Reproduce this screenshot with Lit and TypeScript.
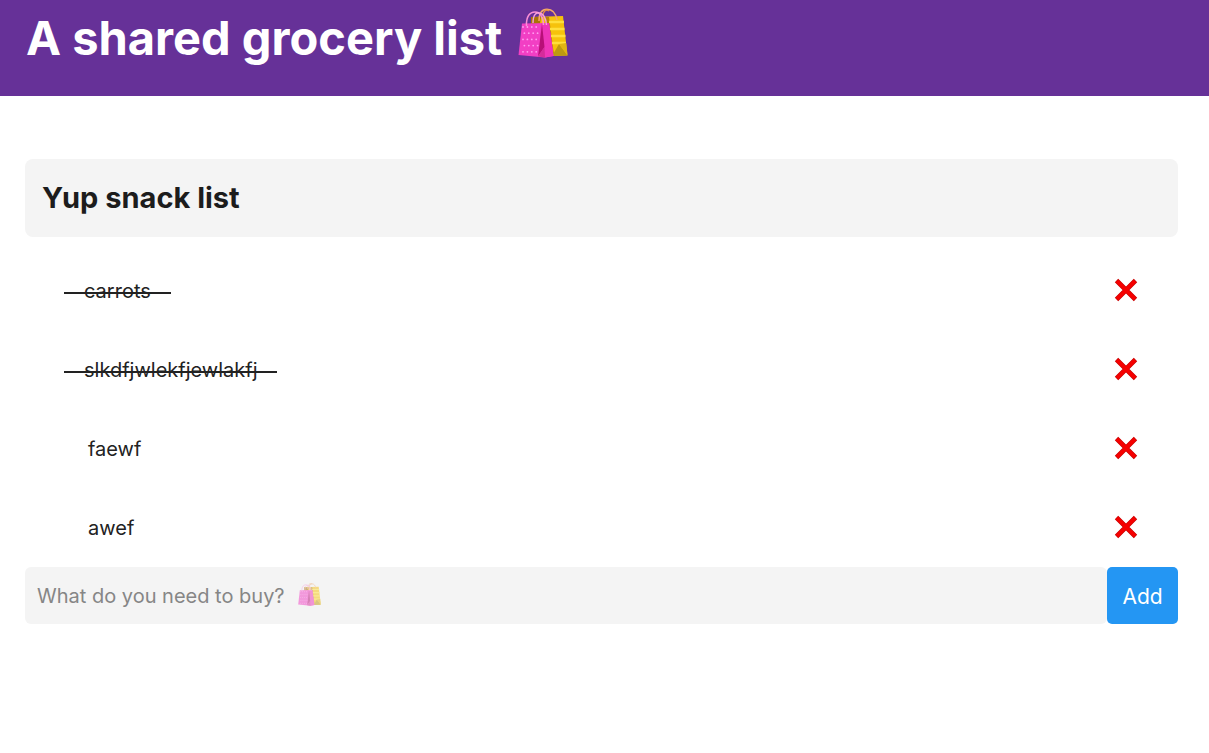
import { LitElement, html, css, svg } from "lit";
import { customElement, property, state } from "lit/decorators.js";

interface Item {
  name: string;
  done: boolean;
}

@customElement("shopping-bags")
class ShoppingBags extends LitElement {
  static styles = css`
    :host {
      display: inline-block;
    }
    svg {
      display: block;
      width: 100%;
      height: 100%;
    }
  `;

  render() {
    const dots = [];
    for (let row = 0; row < 5; row++) {
      for (let col = 0; col < 4; col++) {
        dots.push(svg`<circle cx=${5 + col * 4.4 + (row % 2) * 1.4} cy=${19 + row * 6.2} r="0.9" fill="#ff9df0" />`);
      }
    }
    return html`
      <svg viewBox="0 0 50 50" aria-hidden="true">
        <path d="M13 9 L45 8 L49.500 47.500 L32 48 L16 45 Z" fill="#f6c20c" />
        <path d="M13 9 L23 9 L22 16 L13 16 Z" fill="#a87405" />
        <path d="M27 9 L31 9 L36 47 L30 40 Z" fill="#b98208" />
        <path d="M31 14 H46 M32 21 H46.500 M33 28 H47.500 M34 35 H48" stroke="#ffdf3d" stroke-width="2.400" />
        <path d="M41 36 L49.500 47.500 L34 48 Z" fill="#bd9911" />
        <path d="M41 36 L48.200 35 L49.500 47 Z" fill="#e0b414" />
        <path d="M21 13 C21 4 25 1.200 29 1.200 C35 1.200 38 6 39 12" fill="none" stroke="#f5a96a" stroke-width="1.500" />
        <path d="M25 8 C25 3 28 1 31 3" fill="none" stroke="#e89143" stroke-width="1.300" />
        <path d="M4 15.500 L31 15 L35.500 48 L27 49.500 L0.500 47 Z" fill="#f23fc4" />
        <path d="M23 15 L31 15 L35.500 48 L27 49.500 L21 42 Z" fill="#ef35b9" />
        <path d="M24 16 L26.500 39 L20 48.500 Z" fill="#b80f78" />
        <path d="M26.500 39 L27 49.500 L20 48.500 Z" fill="#d42c9b" />
        ${dots}
        <path d="M8.500 18 C8 8 12 4 17 4 C23 4 25 9 25.500 17" fill="none" stroke="#f98fd6" stroke-width="1.500" />
        <path d="M15 15 C15 7 18 4 21.500 5 C26 6 28 10 28.500 17" fill="none" stroke="#f7a0dc" stroke-width="1.400" />
      </svg>
    `;
  }
}

@customElement("grocery-item")
class GroceryItem extends LitElement {
  @property() name = "";
  @property({ type: Boolean }) done = false;

  static styles = css`
    :host {
      display: flex;
      align-items: center;
      justify-content: space-between;
      height: 79px;
      padding: 0 40px 0 39px;
    }
    .name {
      padding: 2px 24px 0;
      font-size: 20px;
      line-height: 28px;
    }
    .done {
      position: relative;
      padding: 2px 20px 0;
      text-decoration: none;
    }
    .done::after {
      content: "";
      position: absolute;
      left: 0;
      right: 0;
      top: 17px;
      height: 2px;
      background: #222;
    }
    .remove {
      display: block;
      padding: 0;
      border: 0;
      background: none;
      cursor: pointer;
    }
    svg {
      display: block;
      width: 24px;
      height: 24px;
    }
  `;

  private remove() {
    this.dispatchEvent(new CustomEvent("remove"));
  }

  render() {
    return html`
      ${this.done ? html`<s class="name done">${this.name}</s>` : html`<span class="name">${this.name}</span>`}
      <button class="remove" aria-label="Remove ${this.name}" @click=${this.remove}>
        <svg viewBox="0 0 24 24" fill="none" stroke-linecap="butt">
          <path d="M2.500 2.500 L21.500 21.500 M21.500 2.500 L2.500 21.500" stroke="#c80000" stroke-width="4.800" />
          <path d="M3 3 L21 21 M21 3 L3 21" stroke="#f60000" stroke-width="3.600" />
        </svg>
      </button>
    `;
  }
}

@customElement("app-root")
class AppRoot extends LitElement {
  @state() private items: Item[] = [
    { name: "carrots", done: true },
    { name: "slkdfjwlekfjewlakfj", done: true },
    { name: "faewf", done: false },
    { name: "awef", done: false },
  ];
  @state() private draft = "";

  static styles = css`
    :host {
      display: block;
      min-height: 100vh;
      background: #fff;
      color: #222;
      font-family: Inter, "Liberation Sans", sans-serif;
    }
    * {
      box-sizing: border-box;
    }
    header {
      display: flex;
      align-items: flex-start;
      gap: 16px;
      height: 96px;
      padding: 8px 26px 0;
      background: #663198;
      color: #fff;
    }
    h1 {
      margin: 0;
      font-size: 47px;
      line-height: 60px;
      font-weight: 700;
    }
    .header-bags {
      width: 50px;
      height: 50px;
    }
    main {
      padding: 63px 31px 32px 25px;
    }
    h2 {
      margin: 0;
      padding: 20px 17px;
      border-radius: 8px;
      background: #f4f4f4;
      color: #1c1c1c;
      font-size: 29px;
      line-height: 38px;
      font-weight: 700;
    }
    ul {
      margin: 13px 0 1px;
      padding: 0;
      list-style: none;
    }
    form {
      display: flex;
      height: 57px;
    }
    .field {
      position: relative;
      flex: 1;
      display: flex;
    }
    input {
      flex: 1;
      min-width: 0;
      padding: 1px 12px 0;
      border: 0;
      border-radius: 6px;
      background: #f4f4f4;
      color: #222;
      font-family: inherit;
      font-size: 20px;
      outline: none;
    }
    input::placeholder {
      color: #868686;
      opacity: 1;
    }
    .hint-bags {
      position: absolute;
      left: 273px;
      top: 16px;
      width: 23px;
      height: 23px;
      opacity: 0.5;
      pointer-events: none;
    }
    .add {
      width: 71px;
      padding: 1px 0 0;
      border: 0;
      border-radius: 5px;
      background: #2496f3;
      color: #fff;
      font-family: inherit;
      font-size: 21px;
      cursor: pointer;
    }
  `;

  private add(event: Event) {
    event.preventDefault();
    const name = this.draft.trim();
    if (!name) return;
    this.items = [...this.items, { name, done: false }];
    this.draft = "";
  }

  private remove(item: Item) {
    this.items = this.items.filter((other) => other !== item);
  }

  render() {
    return html`
      <header>
        <h1>A shared grocery list</h1>
        <shopping-bags class="header-bags"></shopping-bags>
      </header>
      <main>
        <h2>Yup snack list</h2>
        <ul>
          ${this.items.map(
            (item) => html`<li>
              <grocery-item .name=${item.name} .done=${item.done} @remove=${() => this.remove(item)}></grocery-item>
            </li>`
          )}
        </ul>
        <form @submit=${this.add}>
          <div class="field">
            <input
              type="text"
              aria-label="New item"
              placeholder="What do you need to buy?"
              .value=${this.draft}
              @input=${(e: Event) => (this.draft = (e.target as HTMLInputElement).value)}
            />
            ${this.draft ? null : html`<shopping-bags class="hint-bags"></shopping-bags>`}
          </div>
          <button class="add" type="submit">Add</button>
        </form>
      </main>
    `;
  }
}
